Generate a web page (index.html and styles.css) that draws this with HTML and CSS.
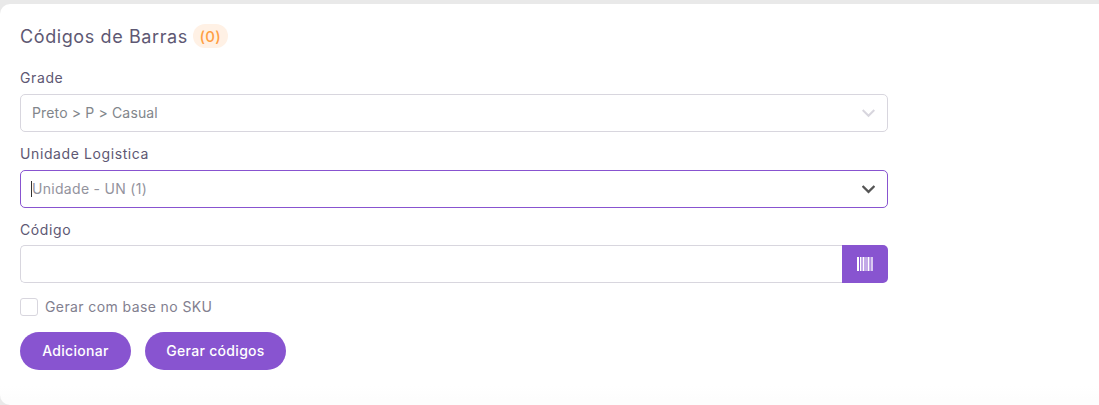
FILE: index.html
```html
<!DOCTYPE html>
<html lang="pt">
<head>
<meta charset="utf-8">
<title>Códigos de Barras</title>
<link rel="stylesheet" href="styles.css">
</head>
<body>
<main class="card">
  <h2 class="title">Códigos de Barras <span class="count">(0)</span></h2>
  <div class="form">
    <div class="field">
      <label class="label">Grade</label>
      <div class="control">
        <span class="value">Preto &gt; P &gt; Casual</span>
        <svg class="chev chev-muted" viewBox="0 0 14 9"><path d="M1.500 1.500 7 7l5.500-5.500"/></svg>
      </div>
    </div>
    <div class="field field-b">
      <label class="label">Unidade Logistica</label>
      <div class="control control-focus">
        <span class="caret"></span>
        <span class="value">Unidade - UN (1)</span>
        <svg class="chev chev-dark" viewBox="0 0 14 9"><path d="M1.500 1.500 7 7l5.500-5.500"/></svg>
      </div>
    </div>
    <div class="field field-c">
      <label class="label">Código</label>
      <div class="group">
        <div class="group-input"></div>
        <button class="group-btn" aria-label="Código de barras">
          <svg class="barcode" viewBox="0 0 16 14"><path d="M0 0h2v14H0zM3 0h1.500v14H3zM5.500 0h2v14h-2zM8.500 0h1v14h-1zM10.500 0h2v14h-2z"/><path class="faint" d="M13.500 0H16v14h-2.500z"/></svg>
        </button>
      </div>
    </div>
    <label class="check"><span class="box"></span><span>Gerar com base no SKU</span></label>
    <div class="actions">
      <button class="btn btn-a">Adicionar</button>
      <button class="btn btn-b">Gerar códigos</button>
    </div>
  </div>
</main>
</body>
</html>
```
FILE: styles.css
```css
* { box-sizing: border-box; }
html, body { margin: 0; height: 100%; }
body {
  background: #e9e9e9;
  font-family: "Inter", "Noto Sans", "Liberation Sans", sans-serif;
  color: #5e5873;
  padding-top: 4px;
  overflow: hidden;
}
.card {
  background: linear-gradient(#fff 382px, #fdfdfd 395px);
  height: 401px;
  border-radius: 10px 0 0 10px;
  padding: 20px 0 0 20px;
}
.title {
  margin: 0;
  font-size: 18px;
  font-weight: 400;
  letter-spacing: 0.6px;
  line-height: 23px;
  display: flex;
  align-items: center;
  gap: 5px;
  color: #5e5873;
}
.count {
  background: #fff1e5;
  color: #ff9f43;
  font-size: 15px;
  font-weight: 500;
  letter-spacing: 0.3px;
  border-radius: 12px;
  height: 24px;
  width: 35px;
  display: flex;
  align-items: center;
  justify-content: center;
}
.form { width: 868px; margin-top: 21px; }
.label {
  display: block;
  font-size: 14px;
  font-weight: 400;
  letter-spacing: 0.6px;
  line-height: 18px;
  margin-bottom: 7px;
  color: #5e5873;
}
.field-b { margin-top: 13px; }
.field-c { margin-top: 13px; }
.field-c .label { margin-bottom: 6px; }
.control {
  height: 38px;
  border: 1px solid #d8d6de;
  border-radius: 5px;
  background: #fff;
  display: flex;
  align-items: center;
  padding: 0 12px 0 11px;
  font-size: 14px;
  letter-spacing: 0.15px;
  color: #82868b;
}
.value { flex: 1; line-height: 18px; margin-bottom: 1px; }
.control-focus { border-color: #8854d0; padding-left: 10px; letter-spacing: 0.3px; color: #93939d; }
.caret { width: 1px; height: 16px; background: #333; }
.chev { width: 13px; height: 9px; fill: none; stroke-linecap: square; }
.chev-muted { stroke: #d8d6de; stroke-width: 2.2; }
.chev-dark { stroke: #555; stroke-width: 2.4; }
.group { display: flex; height: 38px; }
.group-input {
  flex: 1;
  border: 1px solid #d8d6de;
  border-right: 0;
  border-radius: 5px 0 0 5px;
}
.group-btn {
  width: 46px;
  border: 0;
  padding: 0;
  background: #8854d0;
  border-radius: 0 5px 5px 0;
  display: flex;
  align-items: center;
  justify-content: center;
}
.barcode { width: 16px; height: 14px; fill: #fff; }
.barcode .faint { fill: #d9c8f1; }
.check {
  display: flex;
  align-items: center;
  gap: 7px;
  margin-top: 15px;
  font-size: 14px;
  letter-spacing: 0.4px;
  line-height: 18px;
  color: #82808f;
}
.box {
  width: 18px;
  height: 18px;
  border: 1px solid #d8d6de;
  border-radius: 3px;
  background: #fff;
}
.actions { display: flex; gap: 14px; margin-top: 16px; }
.btn {
  height: 38px;
  border: 0;
  border-radius: 19px;
  background: #8854d0;
  color: #fff;
  font-family: inherit;
  font-size: 14px;
  font-weight: 450;
  letter-spacing: 0.3px;
  padding: 0 0 1px;
}
.btn-a { width: 111px; }
.btn-b { width: 141px; }
```
